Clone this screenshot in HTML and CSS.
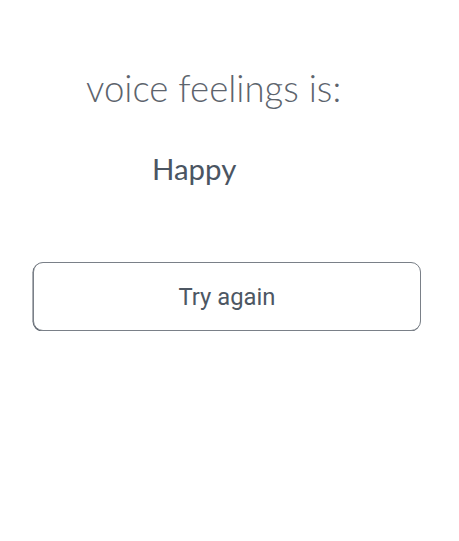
FILE: index.html
```html
<!DOCTYPE html>
<html>
<head>
<meta charset="utf-8">
<link rel="stylesheet" href="styles.css">
</head>
<body>
<main class="result">
  <h1 class="title">voice feelings is:</h1>
  <p class="emotion">Happy</p>
  <button class="retry">Try again</button>
</main>
</body>
</html>
```
FILE: styles.css
```css
html, body {
  margin: 0;
  padding: 0;
  background: #ffffff;
}
.result {
  display: flex;
  flex-direction: column;
  align-items: flex-start;
  padding: 66px 38px 0 33px;
}
.title {
  margin: 0 0 0 53px;
  font-family: Lato, sans-serif;
  font-weight: 300;
  font-size: 36.6px;
  line-height: 44px;
  color: #5d646d;
}
.emotion {
  margin: 42px 0 0 119px;
  font-family: Lato, sans-serif;
  font-weight: 400;
  font-size: 29.4px;
  line-height: 34px;
  color: #4b5562;
}
.retry {
  margin-top: 76px;
  width: 388px;
  height: 69px;
  box-sizing: border-box;
  border: 1px solid #7a8088;
  border-radius: 10px;
  background: #ffffff;
  box-shadow: -0.5px 0.5px 0 #5a616a;
  font-family: Roboto, sans-serif;
  font-size: 23.8px;
  color: #4d5763;
  padding: 1px 0 0;
  cursor: pointer;
}
```
